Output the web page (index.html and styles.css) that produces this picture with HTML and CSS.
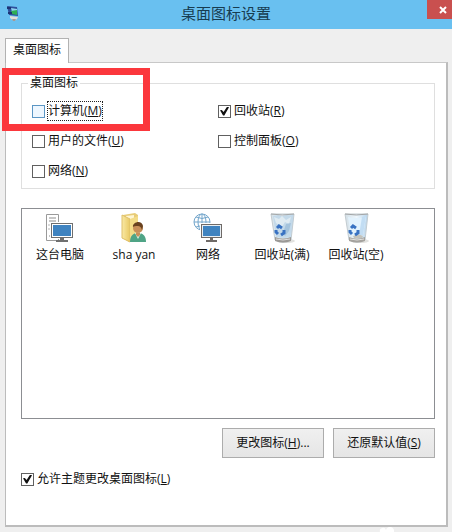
FILE: index.html
```html
<!DOCTYPE html>
<html lang="zh-CN">
<head>
    <meta charset="UTF-8">
    <meta name="viewport" content="width=device-width, initial-scale=1.0">
    <title>桌面图标设置</title>
    <link rel="stylesheet" href="styles.css">
</head>
<body>
    <header class="titlebar">
        <svg class="app-icon" viewBox="0 0 14 18" aria-hidden="true">
            <path d="M1 2l10 1 1 9-9-1z" fill="#2f4f9c"/>
            <path d="M5 4l6 1v2L6 8z" fill="#8ed4ee"/>
            <path d="M5 7l6-1v5l-5-1z" fill="#2fae55"/>
            <path d="M1 3h4v2H1zM2 8h4v2H2z" fill="#1d3474"/>
            <path d="M4 12l8 1-1 2-3 2-4-3z" fill="#e3dedb"/>
            <path d="M6 15h4l-1 2H7z" fill="#a49a96"/>
        </svg>
        <h1>桌面图标设置</h1>
        <button type="button" class="close" aria-label="关闭">
            <svg viewBox="0 0 8 8" aria-hidden="true"><path d="M1 1l6 6M7 1L1 7" stroke="#fff" stroke-width="2" fill="none"/></svg>
        </button>
    </header>

    <main class="dialog">
        <div class="tabs" role="tablist">
            <button type="button" class="tab" role="tab" aria-selected="true">桌面图标</button>
        </div>

        <div class="panel" role="tabpanel">
            <fieldset class="group">
                <legend>桌面图标</legend>
                <div class="options">
                    <label class="check focused"><input type="checkbox"><span>计算机(<u>M</u>)</span></label>
                    <label class="check"><input type="checkbox" checked><span>回收站(<u>R</u>)</span></label>
                    <label class="check"><input type="checkbox"><span>用户的文件(<u>U</u>)</span></label>
                    <label class="check"><input type="checkbox"><span>控制面板(<u>O</u>)</span></label>
                    <label class="check"><input type="checkbox"><span>网络(<u>N</u>)</span></label>
                </div>
                <div class="highlight"></div>
            </fieldset>

            <ul class="icons">
                <li>
                    <svg viewBox="0 0 32 32" aria-hidden="true">
                        <path d="M2.500 2.500h12v26h-12z" fill="#fff" stroke="#9a9a9a"/>
                        <path d="M5 6h7M5 9h7M5 24h3" stroke="#8d8d8d"/>
                        <path d="M4 13h2M4 17h2" stroke="#b5b5b5"/>
                        <path d="M6 10h24v17H6z" fill="#fff"/>
                        <path d="M7 11h22v15H7z" fill="#6f6f6f"/>
                        <path d="M8 12h20v13H8z" fill="#fff"/>
                        <path d="M9 13h18v11H9z" fill="#3f83c0"/>
                        <path d="M16 26h4v2h4v2H12v-2h4z" fill="#6f6f6f"/>
                    </svg>
                    <span>这台电脑</span>
                </li>
                <li>
                    <svg viewBox="0 0 32 32" aria-hidden="true">
                        <defs>
                            <linearGradient id="folder" x1="0" x2="1"><stop offset="0" stop-color="#f9e9a5"/><stop offset="1" stop-color="#e9c963"/></linearGradient>
                        </defs>
                        <path d="M5 3l12-2 3 2v22l-9 5-6-4z" fill="#e8cc78"/>
                        <path d="M8 4l8-1v19H8z" fill="#fff6d4"/>
                        <path d="M4 3l8 4v23l-8-4z" fill="url(#folder)" stroke="#dfc06a"/>
                        <path d="M12 7l8-3v20l-8 6z" fill="#f3dc88"/>
                        <path d="M12 30c0-6 3-9 8-9s8 3 8 9z" fill="#4fa486"/>
                        <path d="M17 21l3 6 3-6z" fill="#e5f5e9"/>
                        <circle cx="20" cy="16" r="5" fill="#c78f59"/>
                        <path d="M15 15c-1-5 9-8 10-1l-1 4c-1-3-2-4-4-4-3 0-4 0-5 1z" fill="#69421f"/>
                        <path d="M18 20q2 2 4 0v3l-2 2-2-2z" fill="#c78f59"/>
                    </svg>
                    <span>sha yan</span>
                </li>
                <li>
                    <svg viewBox="0 0 32 32" aria-hidden="true">
                        <g fill="#fff" stroke="#72a5cb">
                            <circle cx="10" cy="10" r="8"/>
                            <ellipse cx="10" cy="10" rx="4" ry="8"/>
                            <path d="M10 2v16M2 10h16M4 5q6 3 12 0M4 15q6-3 12 0" fill="none"/>
                        </g>
                        <path d="M8 11h23v16H8z" fill="#fff"/>
                        <path d="M9 12h21v14H9z" fill="#6f6a67"/>
                        <path d="M10 13h19v12H10z" fill="#e8eef3"/>
                        <path d="M11 14h17v10H11z" fill="#3f83c0"/>
                        <path d="M18 26h3v2h4v2H14v-2h4z" fill="#6f6a67"/>
                    </svg>
                    <span>网络</span>
                </li>
                <li>
                    <svg viewBox="0 0 32 32" aria-hidden="true">
                        <defs>
                            <linearGradient id="bin" x1="0" x2="1"><stop offset="0" stop-color="#d3dfe6"/><stop offset="0.500" stop-color="#eef7fd"/><stop offset="1" stop-color="#b7d3ea"/></linearGradient>
                        </defs>
                        <ellipse cx="20" cy="29" rx="9" ry="2" fill="#e2e2e0"/>
                        <path d="M5 2h23l-3 26q-8 4-16 0z" fill="url(#bin)" stroke="#c3ccd1"/>
                        <path d="M7 4l5-1 4 1 5-1 6 1-3 21q-7 2-14 0z" fill="#c3d9e9"/>
                        <path d="M8 5l5 2 3-3 4 4 5-3-2 7-4-2-3 5-6-4z" fill="#dfebf2"/>
                        <path d="M20 12l5-1-2 8-4 5-2-3z" fill="#a4c3dc"/>
                        <path d="M9 25q8 3 16 0v4q-8 3-16 0z" fill="#9b9996"/>
                        <path d="M10 27q7 2 14 0" stroke="#dedddd" fill="none"/>
                        <path d="M5 2q11 2 23 0" stroke="#a6a8a8" fill="none"/>
                        <g stroke="#3972c2" stroke-width="3" fill="none">
                            <path d="M11 16l2-2 3 2"/><path d="M18 18v3l-3 2"/><path d="M12 22l-2-2v-2"/>
                        </g>
                    </svg>
                    <span>回收站(满)</span>
                </li>
                <li>
                    <svg viewBox="0 0 32 32" aria-hidden="true">
                        <ellipse cx="20" cy="29" rx="9" ry="2" fill="#e2e2e0"/>
                        <path d="M5 2h23l-3 26q-8 4-16 0z" fill="url(#bin)" stroke="#c3ccd1"/>
                        <path d="M8 5q9 2 18 0l-3 18q-6 2-12 0z" fill="#e2f2fd"/>
                        <path d="M22 5l4-1-3 19h-4z" fill="#c2ddf3"/>
                        <path d="M13 24q5-3 10 0l-1 2h-8z" fill="#c4c3bc"/>
                        <path d="M9 25q8 3 16 0v4q-8 3-16 0z" fill="#a5a39f"/>
                        <path d="M10 27q7 2 14 0" stroke="#e3e2df" fill="none"/>
                        <path d="M5 2q11 2 23 0" stroke="#a4a6a7" fill="none"/>
                        <g stroke="#3972c2" stroke-width="3" fill="none">
                            <path d="M11 16l2-2 3 2"/><path d="M18 18v3l-3 2"/><path d="M12 22l-2-2v-2"/>
                        </g>
                    </svg>
                    <span>回收站(空)</span>
                </li>
            </ul>

            <div class="actions">
                <button type="button">更改图标(<u>H</u>)...</button>
                <button type="button">还原默认值(<u>S</u>)</button>
            </div>

            <label class="check theme"><input type="checkbox" checked><span>允许主题更改桌面图标(<u>L</u>)</span></label>
        </div>
    </main>
    <svg class="paw" viewBox="0 0 18 5" aria-hidden="true"><path d="M2 5a3 3 0 0 1 6-2 4 4 0 0 1 8 2z" fill="#fff"/></svg>
</body>
</html>
```

FILE: styles.css
```css
* {
    box-sizing: border-box;
}

body {
    position: relative;
    display: flex;
    flex-direction: column;
    min-height: 100vh;
    margin: 0;
    background: #efefef;
    color: #111;
    font-family: "Open Sans", "Noto Sans CJK SC", sans-serif;
    font-size: 12px;
    line-height: 18px;
}

button {
    font: inherit;
    color: inherit;
}

u {
    text-underline-offset: 1px;
}

/* 标题栏 */
.titlebar {
    display: grid;
    grid-template-columns: 32px 1fr 32px;
    align-items: center;
    height: 29px;
    padding-bottom: 3px;
    background: #69c0f0;
}

.app-icon {
    width: 14px;
    height: 18px;
    margin-left: 6px;
}

.titlebar h1 {
    margin: 0;
    color: #173c50;
    font-size: 15px;
    font-weight: normal;
    text-align: center;
}

.close {
    display: flex;
    align-items: center;
    justify-content: center;
    align-self: start;
    justify-self: end;
    width: 25px;
    height: 19px;
    padding: 0 0 0 6px;
    border: none;
    background: #c9504f;
}

.close svg {
    width: 8px;
    height: 8px;
}

/* 选项卡 */
.dialog {
    display: flex;
    flex: 1;
    flex-direction: column;
    padding: 9px 4px 5px 5px;
}

.tabs {
    display: flex;
}

.tab {
    position: relative;
    z-index: 1;
    height: 25px;
    margin-bottom: -1px;
    padding: 0 7px 2px;
    border: 1px solid #b2b2b2;
    border-bottom: none;
    background: #fff;
}

.panel {
    flex: 1;
    padding: 11px 11px 16px 15px;
    border: 1px solid #bcbcbc;
    border-top-color: #c8c8c8;
    border-right-width: 2px;
    border-bottom-width: 2px;
    background: #fff;
}

/* 桌面图标分组 */
.group {
    position: relative;
    min-width: 0;
    margin: 0;
    padding: 9px 10px 7px;
    border: 1px solid #dfdfdf;
}

.group legend {
    margin-left: -4px;
    padding: 0 2px;
}

.options {
    display: grid;
    grid-template-columns: 186px 1fr;
    grid-auto-rows: 20px;
    row-gap: 10px;
}

.check {
    display: flex;
    align-items: center;
    justify-self: start;
    gap: 3px;
}

.check input {
    display: grid;
    place-items: center;
    appearance: none;
    width: 13px;
    height: 13px;
    margin: 0;
    border: 1px solid #606060;
    background: #fff;
}

.check input:checked::before {
    content: "";
    width: 9px;
    height: 9px;
    background: #111;
    clip-path: polygon(0 42%, 20% 38%, 40% 62%, 80% 0, 100% 8%, 48% 100%, 34% 100%);
}

.focused input {
    border-color: #5b96c4;
    background: #eef7ff;
}

.focused span {
    outline: 1px dotted #222;
}

/* 红色标注框 */
.highlight {
    position: absolute;
    top: -24px;
    left: -20px;
    width: 148px;
    height: 63px;
    border: 7px solid #fb373c;
    pointer-events: none;
}

/* 图标列表 */
.icons {
    display: flex;
    height: 211px;
    margin: 19px 0 0;
    padding: 3px 1px;
    border: 1px solid #8c8e92;
    list-style: none;
}

.icons li {
    display: flex;
    flex-direction: column;
    align-items: center;
    gap: 2px;
    width: 74px;
    white-space: nowrap;
}

.icons svg {
    width: 32px;
    height: 32px;
}

.actions {
    display: flex;
    justify-content: flex-end;
    gap: 9px;
    margin-top: 9px;
}

.actions button {
    width: 102px;
    height: 30px;
    padding: 0;
    border: 1px solid #acacac;
    background: linear-gradient(#f0f0f0, #e5e5e5);
}

.theme {
    margin-top: 12px;
}

.paw {
    position: absolute;
    right: 56px;
    bottom: 0;
    width: 18px;
    height: 5px;
}
```
